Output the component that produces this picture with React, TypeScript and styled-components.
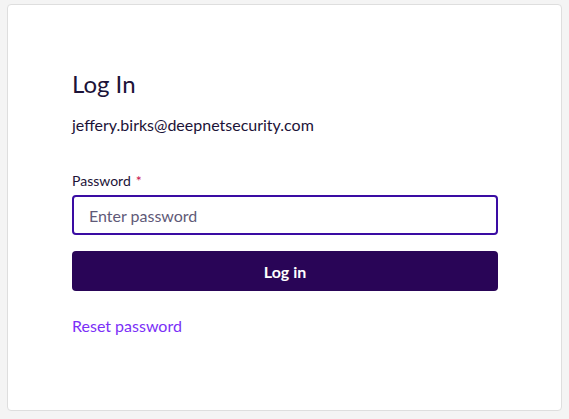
import React from "react";
import styled, { createGlobalStyle } from "styled-components";

const Global = createGlobalStyle`
  html, body { margin: 0; padding: 0; background: #f4f4f4; }
  body { font-family: "Lato", "Open Sans", sans-serif; }
  * { box-sizing: border-box; }
`;

const Page = styled.div`
  padding: 4px 7px 0 7px;
  width: 569px;
  height: 419px;
`;

const Card = styled.div`
  width: 555px;
  height: 407px;
  background: #ffffff;
  border: 1px solid #dedede;
  border-radius: 4px;
  padding: 64px 64px 0 64px;
  display: flex;
  flex-direction: column;
`;

const Title = styled.h1`
  margin: 0;
  font-size: 24px;
  font-weight: 400;
  color: #1c1338;
  line-height: 30px;
`;

const Email = styled.div`
  margin-top: 16px;
  font-size: 16px;
  color: #1c1338;
  line-height: 20px;
`;

const Label = styled.label`
  margin-top: 37px;
  font-size: 14px;
  color: #1c1338;
  line-height: 18px;
`;

const Req = styled.span`
  color: #c8104e;
  margin-left: 5px;
`;

const Input = styled.input`
  margin-top: 5px;
  width: 426px;
  height: 40px;
  border: 2px solid #3a0ca3;
  border-radius: 4px;
  padding: 0 15px;
  font-family: inherit;
  font-size: 16px;
  color: #1c1338;
  outline: none;
  &::placeholder { color: #5f5a78; }
`;

const Button = styled.button`
  margin-top: 16px;
  width: 426px;
  height: 40px;
  background: #290557;
  border: none;
  border-radius: 4px;
  color: #ffffff;
  font-family: inherit;
  font-weight: 700;
  font-size: 16px;
`;

const Link = styled.a`
  margin-top: 25px;
  font-size: 16px;
  color: #7b2ff7;
  text-decoration: none;
  line-height: 20px;
  align-self: flex-start;
`;

export default function App() {
  return (
    <>
      <Global />
      <Page>
        <Card>
          <Title>Log In</Title>
          <Email>jeffery.birks@deepnetsecurity.com</Email>
          <Label>
            Password<Req>*</Req>
          </Label>
          <Input type="password" placeholder="Enter password" />
          <Button>Log in</Button>
          <Link href="#">Reset password</Link>
        </Card>
      </Page>
    </>
  );
}
